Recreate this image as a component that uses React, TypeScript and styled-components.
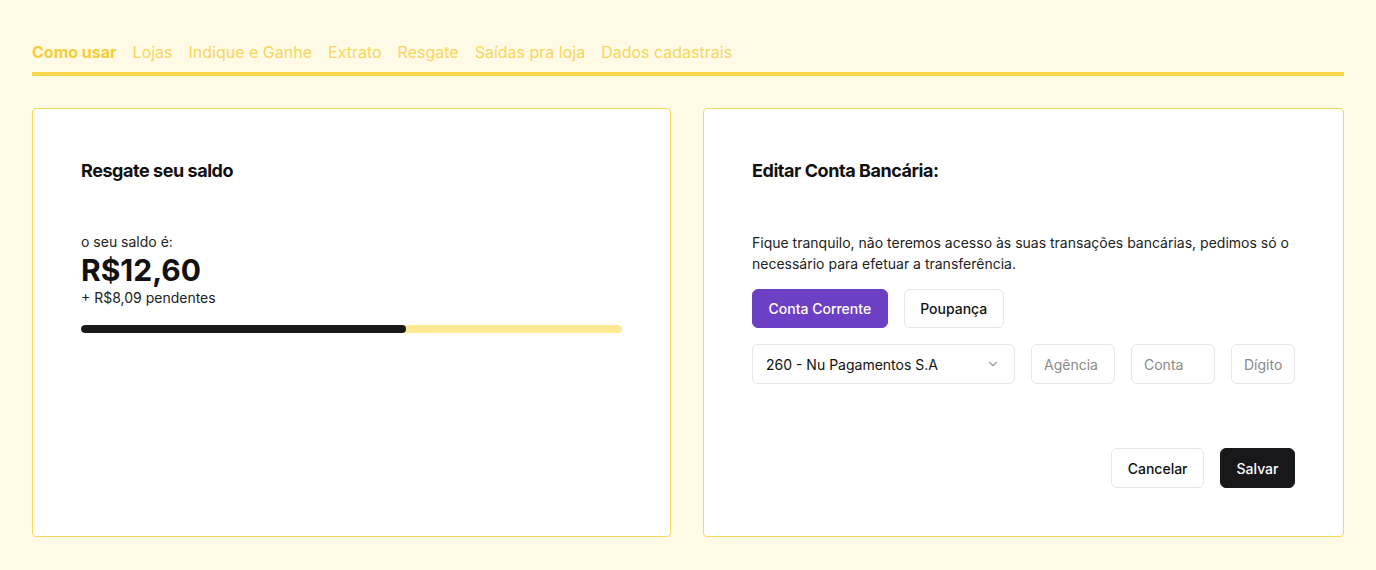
import React from "react";
import styled, { createGlobalStyle } from "styled-components";

const Global = createGlobalStyle`
  * { box-sizing: border-box; }
  html, body { overflow: hidden; }
  body {
    margin: 0;
    background: #fffae5;
    font-family: Inter, "Noto Sans", sans-serif;
    color: #111;
  }
`;

const Page = styled.div`
  padding: 40px 32px 32px;
`;

const Tabs = styled.nav`
  display: flex;
  gap: 16px;
  padding-bottom: 8px;
  border-bottom: 4px solid #f9d548;
`;

const Tab = styled.span<{ $active?: boolean }>`
  font-size: 16px;
  line-height: 24px;
  color: ${(p) => (p.$active ? "#f4cf3a" : "#f6d65c")};
  font-weight: ${(p) => (p.$active ? 700 : 400)};
`;

const Grid = styled.div`
  display: grid;
  grid-template-columns: 1fr 1fr;
  gap: 32px;
  margin-top: 32px;
`;

const Card = styled.section`
  background: #fff;
  border: 1px solid #f6d85c;
  border-radius: 4px;
  padding: 48px;
`;

const Title = styled.h2`
  margin: 0;
  font-size: 18px;
  line-height: 28px;
  font-weight: 700;
  letter-spacing: -0.45px;
`;

const Small = styled.p<{ $mt?: number }>`
  margin: ${(p) => p.$mt ?? 0}px 0 0;
  font-size: 14px;
  line-height: 20px;
  color: #222;
`;

const Amount = styled.div`
  font-size: 30px;
  line-height: 36px;
  font-weight: 700;
`;

const Track = styled.div`
  margin-top: 17px;
  height: 8px;
  border-radius: 4px;
  background: #fde992;
  overflow: hidden;
`;

const Fill = styled.div`
  height: 100%;
  background: #18181b;
  border-radius: 4px;
`;

const Paragraph = styled.p`
  margin: 47px 0 0;
  font-size: 14px;
  line-height: 21px;
  color: #222;
`;

const Row = styled.div<{ $mt: number; $end?: boolean }>`
  display: flex;
  gap: 16px;
  margin-top: ${(p) => p.$mt}px;
  justify-content: ${(p) => (p.$end ? "flex-end" : "flex-start")};
`;

const Button = styled.button<{ $variant: "primary" | "dark" | "outline"; $h?: number }>`
  height: ${(p) => p.$h ?? 40}px;
  padding: 0 15.5px;
  border-radius: 6px;
  font-family: Inter, sans-serif;
  font-size: 14px;
  font-weight: 500;
  cursor: pointer;
  border: 1px solid
    ${(p) =>
      p.$variant === "outline" ? "#e6e6e6" : p.$variant === "primary" ? "#6d3fc4" : "#18181b"};
  background: ${(p) =>
    p.$variant === "primary" ? "#6d3fc4" : p.$variant === "dark" ? "#18181b" : "#fff"};
  color: ${(p) => (p.$variant === "outline" ? "#111" : "#fff")};
`;

const Select = styled.div`
  width: 263px;
  height: 40px;
  display: flex;
  align-items: center;
  justify-content: space-between;
  padding: 0 14px 0 13px;
  border: 1px solid #e6e6e6;
  border-radius: 6px;
  font-size: 14px;
  color: #111;
`;

const Input = styled.input<{ $w: number }>`
  width: ${(p) => p.$w}px;
  height: 40px;
  border: 1px solid #e6e6e6;
  border-radius: 6px;
  padding: 0 12px;
  font-family: Inter, sans-serif;
  font-size: 14px;
  outline: none;
  &::placeholder { color: #8a8a8a; }
`;

export default function App() {
  const tabs = ["Como usar", "Lojas", "Indique e Ganhe", "Extrato", "Resgate", "Saídas pra loja", "Dados cadastrais"];
  return (
    <>
      <Global />
      <Page>
        <Tabs>
          {tabs.map((t, i) => (
            <Tab key={t} $active={i === 0}>{t}</Tab>
          ))}
        </Tabs>
        <Grid>
          <Card>
            <Title>Resgate seu saldo</Title>
            <Small $mt={47}>o seu saldo é:</Small>
            <Amount>R$12,60</Amount>
            <Small>+ R$8,09 pendentes</Small>
            <Track>
              <Fill style={{ width: "60%" }} />
            </Track>
          </Card>
          <Card>
            <Title>Editar Conta Bancária:</Title>
            <Paragraph>
              Fique tranquilo, não teremos acesso às suas transações bancárias, pedimos só o necessário para efetuar a transferência.
            </Paragraph>
            <Row $mt={15}>
              <Button $variant="primary" $h={39}>Conta Corrente</Button>
              <Button $variant="outline" $h={39}>Poupança</Button>
            </Row>
            <Row $mt={16}>
              <Select>
                <span>260 - Nu Pagamentos S.A</span>
                <svg width="14" height="14" viewBox="0 0 24 24" fill="none" stroke="#999" strokeWidth="2" strokeLinecap="round" strokeLinejoin="round">
                  <path d="m6 9 6 6 6-6" />
                </svg>
              </Select>
              <Input $w={84} placeholder="Agência" />
              <Input $w={84} placeholder="Conta" />
              <Input $w={64} placeholder="Dígito" />
            </Row>
            <Row $mt={64} $end>
              <Button $variant="outline">Cancelar</Button>
              <Button $variant="dark">Salvar</Button>
            </Row>
          </Card>
        </Grid>
      </Page>
    </>
  );
}
